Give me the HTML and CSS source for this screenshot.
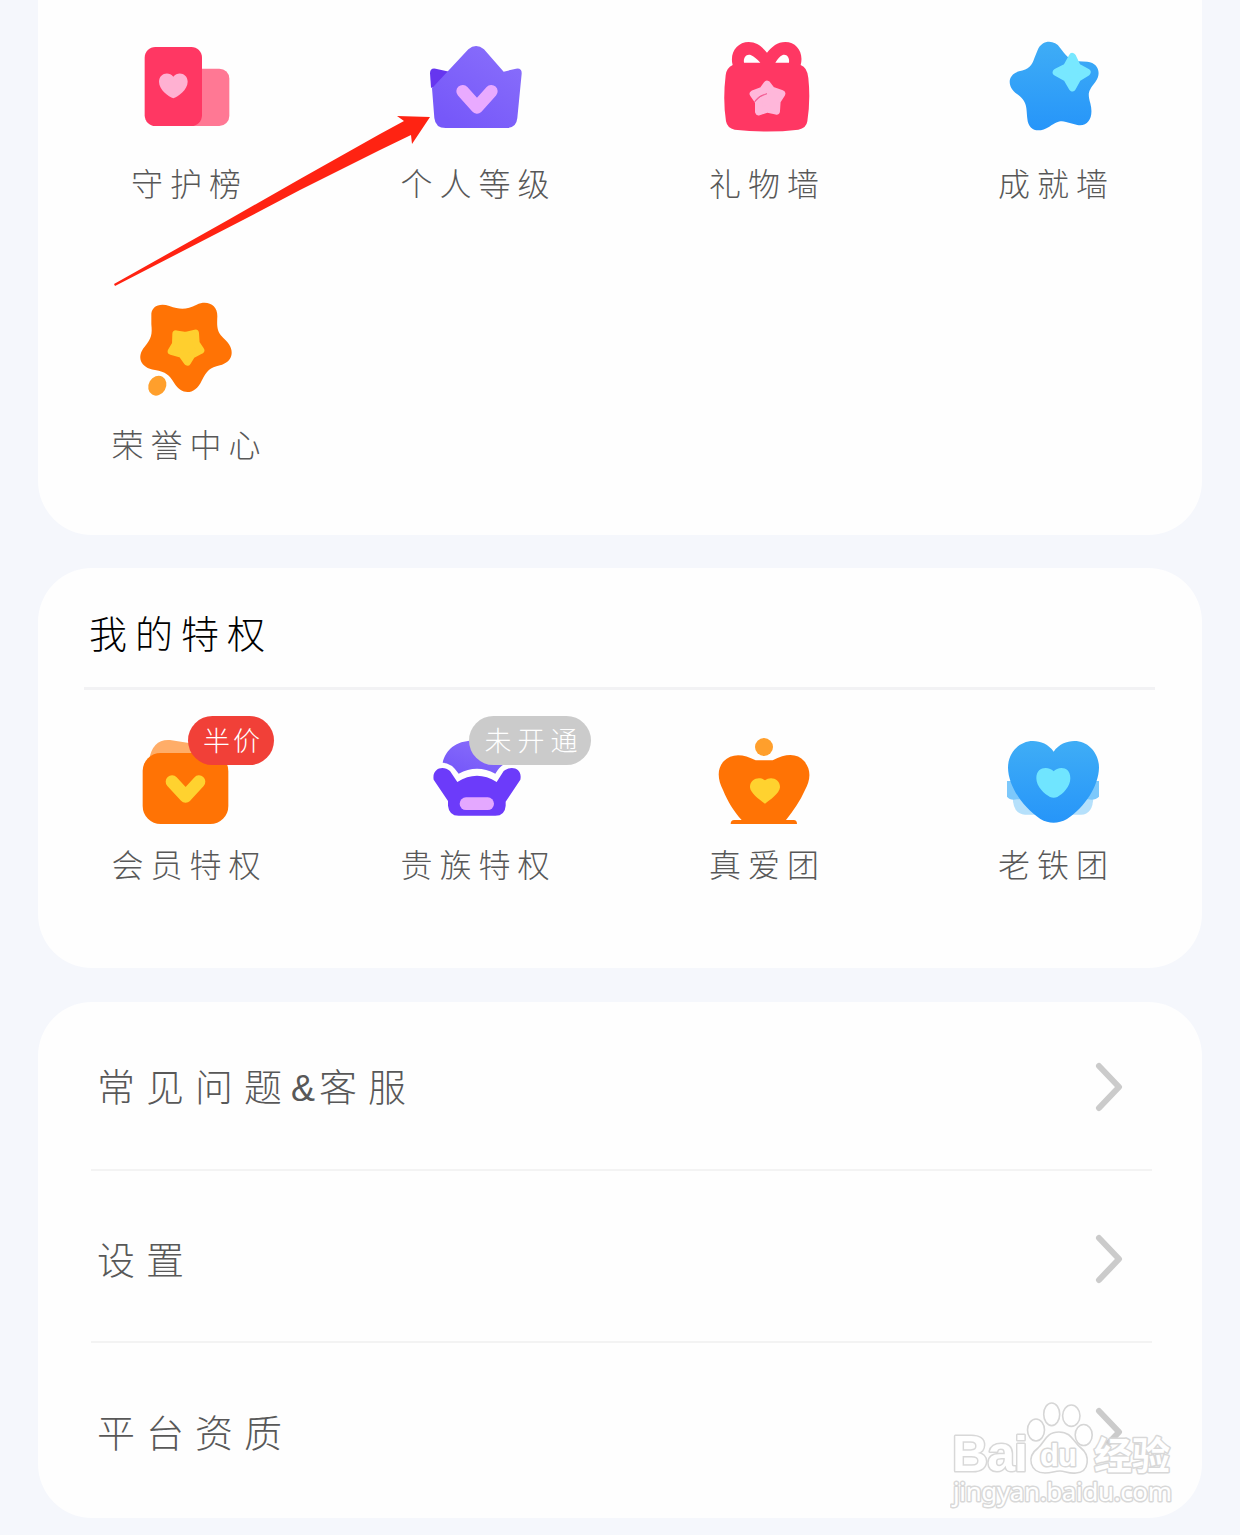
FILE: index.html
```html
<!DOCTYPE html>
<html lang="zh-CN">
<head>
  <meta charset="UTF-8">
  <meta name="viewport" content="width=device-width, initial-scale=1.0">
  <title>我的</title>

  <link rel="stylesheet" href="styles.css">
</head>
<body>
  <main class="page">
    <section class="card card-tools">
      <div class="grid">
        <a class="item">
          <svg class="icon" viewBox="78 18 363 363">
            <rect x="230" y="146" width="158" height="172" rx="30" fill="#ff7894"/>
            <rect x="134" y="81" width="172" height="237" rx="32" fill="#ff3763"/>
            <path d="M220 235C206 229 177 210 177 185C177 160 206 152 220 170C234 152 263 160 263 185C263 210 234 229 220 235Z" fill="#ffb1d2"/>
          </svg>
          <span class="label">守护榜</span>
        </a>
        <a class="item">
          <svg class="icon" viewBox="105 18 363 363">
            <defs>
              <linearGradient id="purple" x1="1" y1="0" x2="0.3" y2="1">
                <stop offset="0" stop-color="#8a70fb"/>
                <stop offset="1" stop-color="#7658f9"/>
              </linearGradient>
            </defs>
            <path d="M153 203L150 160Q150 143 167 146L215 157L190 200Z" fill="#6636ef"/>
            <path d="M156 205L265 88Q288 68 312 88L371 155L408 146Q426 143 425 161L412 294Q409 324 380 324H197Q166 324 163 294Z" fill="url(#purple)"/>
            <path d="M248 214L291 262L334 214" fill="none" stroke="#e9aaff" stroke-width="38" stroke-linecap="round" stroke-linejoin="round"/>
          </svg>
          <span class="label">个人等级</span>
        </a>
        <a class="item">
          <svg class="icon" viewBox="102 18 363 363">
            <path d="M188 135C178 98 202 66 236 66C260 66 276 80 291 98C306 80 322 66 346 66C380 66 402 98 392 135Q412 142 415 174Q422 240 412 304Q409 325 385 329Q291 340 194 329Q172 325 168 304Q158 240 167 166Q169 144 188 135Z" fill="#ff3763"/>
            <path d="M222 128C219 112 230 101 242 105C252 109 260 117 271 128Z" fill="#fff"/>
            <path d="M357 128C360 112 349 101 338 105C328 109 324 117 316 128Z" fill="#fff"/>
            <path class="round" d="M291 193L305 211L335 221L321 243L319 273L291 267L266 275L266 245L250 222L278 211Z" fill="#ffb7da" stroke="#ffb7da"/>
            <path d="M253 247Q262 227 291 221Q270 226 253 247Z" fill="#f2558d" stroke="#f2558d" stroke-width="2"/>
          </svg>
          <span class="label">礼物墙</span>
        </a>
        <a class="item">
          <svg class="icon" viewBox="99 18 363 363">
            <defs>
              <linearGradient id="blue" x1="0" y1="0" x2="0" y2="1">
                <stop offset="0" stop-color="#3fadf6"/>
                <stop offset="1" stop-color="#2695f9"/>
              </linearGradient>
            </defs>
            <path d="M233 90C246 58 284 59 300 83C316 104 329 123 355 124L382 125C416 128 425 162 406 186C382 216 384 222 391 250C402 292 385 321 352 315L318 306C300 301 291 306 268 320C235 341 205 331 202 296C199 255 200 244 171 222C139 199 143 163 177 154C207 148 216 137 223 115Z" fill="url(#blue)"/>
            <path class="round" d="M337 110L352 141L381 157L353 174L337 203L320 174L289 157L320 141Z" fill="#78e8ff" stroke="#78e8ff"/>
          </svg>
          <span class="label">成就墙</span>
        </a>
        <a class="item">
          <svg class="icon" viewBox="108 51 363 363">
            <path d="M184 138C182 108 210 98 238 108C272 120 290 119 320 104C352 89 383 105 382 139C380 180 383 188 407 211C439 243 426 278 390 286C359 293 351 302 335 332C315 376 275 376 253 340C237 313 228 307 195 300C150 293 139 259 164 230C185 205 187 193 184 163Z" fill="#ff7305"/>
            <path class="round" d="M258 192L287 197L316 190L318 220L332 241L305 255L292 276L276 253L244 244L257 222Z" fill="#ffcf2e" stroke="#ffcf2e"/>
            <ellipse cx="202" cy="347" rx="26" ry="31" transform="rotate(30 202 347)" fill="#ff9f2c"/>
          </svg>
          <span class="label">荣誉中心</span>
        </a>
      </div>
    </section>

    <section class="card card-rights">
      <h2 class="card-title">我的特权</h2>
      <div class="grid">
        <a class="item">
          <svg class="icon" viewBox="108 21 363 363">
            <path d="M177 180Q188 116 240 120L330 134V200H177Z" fill="#ffad68"/>
            <rect x="158" y="159" width="257" height="213" rx="54" fill="#ff7305"/>
            <path d="M246 245L287 289L327 245" fill="none" stroke="#ffd22f" stroke-width="38" stroke-linecap="round" stroke-linejoin="round"/>
          </svg>
          <span class="badge badge-half">半价</span>
          <span class="label">会员特权</span>
        </a>
        <a class="item">
          <svg class="icon" viewBox="105 21 363 363">
            <path d="M188 188C197 148 229 122 277 122C330 122 360 153 372 193Q359 200 346 221Q291 192 236 221Q214 188 188 188Z" fill="url(#purple)"/>
            <path d="M161 239C155 207 188 194 210 213L232 246Q291 208 350 246L371 213C396 194 428 207 421 239L377 305V317Q375 347 346 347H236Q207 347 204 317V303Z" fill="#6c3bfa"/>
            <rect x="239" y="292" width="103" height="38" rx="19" fill="#e4a8ff"/>
          </svg>
          <span class="badge badge-off">未开通</span>
          <span class="label">贵族特权</span>
        </a>
        <a class="item">
          <svg class="icon" viewBox="102 21 363 363">
            <circle cx="282" cy="141" r="27" fill="#ff9f2c"/>
            <path d="M257 181H308C350 159 382 160 403 184C425 211 421 240 405 270C390 304 370 333 348 360H371Q381 360 381 372H182Q182 360 193 360H215C191 333 174 307 159 270C143 239 140 207 161 184C183 160 218 160 257 181Z" fill="#ff7305"/>
            <path d="M285 311C272 302 241 280 240 262C239 235 270 228 285 241C300 228 331 235 330 262C329 280 298 302 285 311Z" fill="#ffd22f"/>
          </svg>
          <span class="label">真爱团</span>
        </a>
        <a class="item">
          <svg class="icon" viewBox="99 21 363 363">
            <path d="M158 290H400Q399 343 363 344H195Q159 343 158 290Z" fill="#b5e0fb"/>
            <path d="M141 243H417V290Q405 302 385 298H170Q150 302 141 290Z" fill="#7cc8fb"/>
            <path d="M281 155C296 133 320 123 343 123C385 123 417 159 417 203C416 258 374 322 321 357C293 372 268 372 241 357C188 322 145 258 144 203C144 159 177 123 219 123C242 123 266 133 281 155Z" fill="url(#blue)"/>
            <path d="M281 214C293 199 331 196 331 235C331 260 309 282 292 291Q281 296 270 291C253 282 229 260 229 235C229 196 269 199 281 214Z" fill="#70e5ff"/>
          </svg>
          <span class="label">老铁团</span>
        </a>
      </div>
    </section>

    <section class="card card-menu">
      <a class="row">
        <span class="row-text">常见问题<span class="amp">&amp;</span>客服</span>
        <svg class="chevron" viewBox="0 0 32 50"><path d="M5 4L25 25L5 46"/></svg>
      </a>
      <a class="row">
        <span class="row-text">设置</span>
        <svg class="chevron" viewBox="0 0 32 50"><path d="M5 4L25 25L5 46"/></svg>
      </a>
      <a class="row">
        <span class="row-text">平台资质</span>
        <svg class="chevron" viewBox="0 0 32 50"><path d="M5 4L25 25L5 46"/></svg>
      </a>
    </section>

    <!-- 指向“个人等级”的箭头 -->
    <svg class="arrow" viewBox="0 0 320 174">
      <path d="M2 172L116 108L188 67L268 22L292 9L285 4L318 5L300 32L299 23L268 38L188 78L131 108L3 174Z" fill="#ff2312"/>
    </svg>

    <!-- 水印 -->
    <svg class="watermark" viewBox="0 0 230 112">
      <g fill="#fff" stroke="#d6d6d6" stroke-width="1.6">
        <ellipse cx="86" cy="30" rx="8.5" ry="11"/>
        <ellipse cx="101.7" cy="14.3" rx="8" ry="11.3"/>
        <ellipse cx="121.3" cy="15.7" rx="8.7" ry="10.7"/>
        <ellipse cx="133.7" cy="35" rx="8.5" ry="10.5"/>
        <path d="M109 32C96 32 95 42 88 48C76 57 80 73 95 73C102 73 104 71 110 71C115 71 119 74 126 73C140 72 140 55 131 48C123 42 122 32 109 32Z"/>
      </g>
      <g class="wm-text">
        <text class="wm-logo" x="2" y="71" textLength="76">Bai</text>
        <text class="wm-du" x="90" y="66" textLength="37">du</text>
        <text class="wm-cn" x="144" y="69" textLength="76">经验</text>
        <text class="wm-url" x="3" y="101" textLength="219">jingyan.baidu.com</text>
      </g>
    </svg>
  </main>
</body>
</html>
```
FILE: styles.css
```css
* {
  margin: 0;
  padding: 0;
  box-sizing: border-box;
}

body {
  background-color: #f5f7fc;
  font-family: "Liberation Sans", "Noto Sans CJK SC", sans-serif;
  font-weight: 300;
  color: #585858;
}

.page {
  position: relative;
  display: flex;
  flex-direction: column;
  height: 1535px;
  padding: 0 38px;
  overflow: hidden;
}

.card {
  background-color: #fefefe;
  border-radius: 54px;
}

.card-tools {
  height: 535px;
  padding-top: 26px;
  border-radius: 0 0 54px 54px;
}

.card-rights {
  height: 400px;
  margin-top: 33px;
}

.card-menu {
  height: 516px;
  margin-top: 34px;
  padding: 0 50px 0 53px;
}

.grid {
  display: grid;
  grid-template-columns: repeat(4, 289px);
  row-gap: 78px;
  padding-left: 4px;
}

.item {
  position: relative;
  display: flex;
  flex-direction: column;
  align-items: center;
}

.icon {
  width: 121px;
  height: 121px;
}

.round {
  stroke-width: 22;
  stroke-linejoin: round;
}

.label {
  margin-top: 12px;
  font-size: 32px;
  line-height: 52px;
  height: 50px;
  letter-spacing: 7px;
  text-indent: 6px;
  white-space: nowrap;
}

.card-title {
  height: 122px;
  margin: 0 47px 17px 46px;
  padding: 12px 0 0 5px;
  border-bottom: 3px solid #f2f2f4;
  color: #000;
  font-size: 38px;
  font-weight: 300;
  line-height: 110px;
  letter-spacing: 8px;
}

.card-rights .label {
  margin-top: 12px;
}

/* 图标右上角的角标 */
.badge {
  position: absolute;
  top: 9px;
  left: 146px;
  height: 49px;
  border-radius: 25px;
  color: #fff;
  font-size: 27px;
  line-height: 53px;
  letter-spacing: 3px;
  text-indent: 4px;
  text-align: center;
  white-space: nowrap;
}

.badge-half {
  width: 86px;
  background-color: #f14038;
}

.badge-off {
  left: 138px;
  width: 122px;
  background-color: #cbcbcb;
  letter-spacing: 6px;
  text-indent: 8px;
}

.row {
  display: flex;
  align-items: center;
  justify-content: space-between;
  height: 172px;
  padding: 6px 26px 0 6px;
  border-bottom: 2px solid #f3f3f3;
}

.row:first-child {
  height: 169px;
  padding-top: 3px;
}

.row:last-child {
  border-bottom: none;
}

.row-text {
  padding-top: 3px;
  font-size: 38px;
  line-height: 50px;
  letter-spacing: 11px;
}

.amp {
  margin-left: -2px;
  font-size: 36px;
  letter-spacing: 4px;
}

.chevron {
  width: 32px;
  height: 50px;
}

.chevron path {
  fill: none;
  stroke: #cbcbcb;
  stroke-width: 6;
  stroke-linecap: round;
  stroke-linejoin: round;
}

.arrow {
  position: absolute;
  top: 112px;
  left: 112px;
  width: 320px;
  height: 174px;
}

.watermark {
  position: absolute;
  top: 1400px;
  left: 950px;
  width: 230px;
  height: 112px;
}

.wm-text {
  fill: #fff;
  stroke: #d8d8d8;
  stroke-width: 3px;
  stroke-linejoin: round;
  paint-order: stroke;
}

.wm-logo {
  font-size: 50px;
  font-weight: 700;
}

.wm-du {
  font-size: 31px;
  font-weight: 700;
}

.wm-cn {
  font-size: 38px;
  font-weight: 700;
}

.wm-url {
  font-family: "Noto Sans", sans-serif;
  font-size: 26px;
  font-weight: 400;
}
```
